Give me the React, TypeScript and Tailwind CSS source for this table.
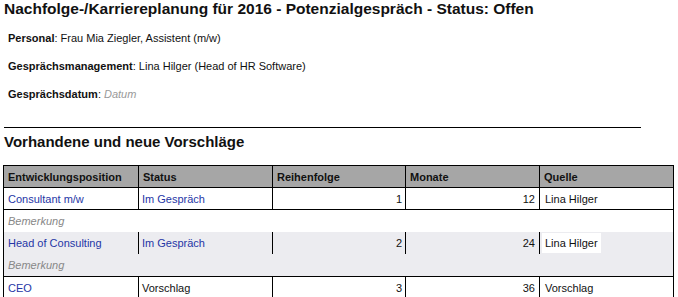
import React from "react";

const font = { fontFamily: '"Liberation Sans", Arial, sans-serif' };

type Row = {
  pos: string;
  status: string;
  statusLink: boolean;
  order: string;
  months: string;
  source: string;
  gray: boolean;
};

const rows: Row[] = [
  { pos: "Consultant m/w", status: "Im Gespräch", statusLink: true, order: "1", months: "12", source: "Lina Hilger", gray: false },
  { pos: "Head of Consulting", status: "Im Gespräch", statusLink: true, order: "2", months: "24", source: "Lina Hilger", gray: true },
  { pos: "CEO", status: "Vorschlag", statusLink: false, order: "3", months: "36", source: "Vorschlag", gray: false },
];

export default function App() {
  return (
    <div className="w-[678px] h-[297px] overflow-hidden bg-white text-black" style={font}>
      <div className="pl-[4px] pt-0 text-[15.5px] leading-[18px] font-bold text-[#111]">
        Nachfolge-/Karriereplanung für 2016 - Potenzialgespräch - Status: Offen
      </div>
      <div className="pl-[8px] mt-[13px] flex flex-col gap-[14px] text-[11px] leading-[14px] text-[#111]">
        <div>
          <span className="font-bold">Personal</span>: Frau Mia Ziegler, Assistent (m/w)
        </div>
        <div>
          <span className="font-bold">Gesprächsmanagement</span>: Lina Hilger (Head of HR Software)
        </div>
        <div>
          <span className="font-bold">Gesprächsdatum</span>: <span className="italic text-[#999]">Datum</span>
        </div>
      </div>
      <div className="ml-[4px] mt-[26px] w-[637px] border-t border-black" />
      <div className="pl-[4px] mt-[5px] text-[15px] leading-[18px] font-bold text-[#111]">
        Vorhandene und neue Vorschläge
      </div>
      <div className="ml-[3px] mt-[14px] w-[671px] border-l border-r border-black text-[11px] leading-[14px]">
        <div className="grid grid-cols-[135px_134px_133px_134px_133px] border-t border-b border-black bg-[#a6a6a6] font-bold text-[#111]">
          {["Entwicklungsposition", "Status", "Reihenfolge", "Monate", "Quelle"].map((h, i) => (
            <div
              key={h}
              className={`h-[21px] flex items-center pl-[4px] ${i < 4 ? "border-r border-black" : ""}`}
            >
              {h}
            </div>
          ))}
        </div>
        {rows.map((r, idx) => (
          <div key={idx} className={r.gray ? "bg-[#ececf0]" : "bg-white"}>
            <div
              className={`grid grid-cols-[135px_134px_133px_134px_133px] ${
                r.gray ? "" : "border-b border-black"
              }`}
            >
              <div className={`${r.gray ? "h-[22px]" : "h-[21px]"} flex items-center pl-[4px] border-r border-black text-[#2536a6]`}>
                {r.pos}
              </div>
              <div
                className={`flex items-center pl-[3px] border-r border-black ${
                  r.statusLink ? "text-[#2536a6]" : "text-[#111]"
                }`}
              >
                {r.status}
              </div>
              <div className="flex items-center justify-end pr-[3px] border-r border-black text-[#111]">
                {r.order}
              </div>
              <div className="flex items-center justify-end pr-[4px] border-r border-black text-[#111]">
                {r.months}
              </div>
              <div className="flex items-center pl-[2px] text-[#111]">
                <span className="bg-white px-[3px] leading-[20px]">{r.source}</span>
              </div>
            </div>
            {idx < 2 && (
              <div
                className={`h-[22px] flex items-center pl-[4px] italic text-[#888] ${
                  r.gray ? "border-b border-black h-[23px]" : ""
                }`}
              >
                Bemerkung
              </div>
            )}
          </div>
        ))}
      </div>
    </div>
  );
}
